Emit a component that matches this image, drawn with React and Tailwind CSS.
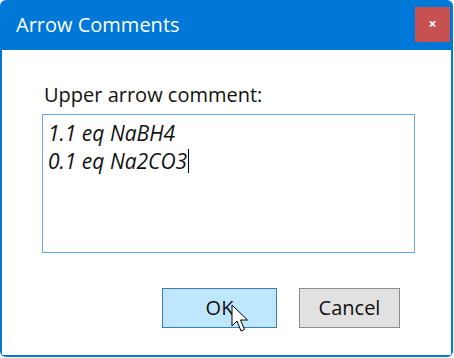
import React from 'react';

// Windows 10 style dialog: "Arrow Comments"
function Cursor() {
    return (
        <svg className="absolute left-[231px] top-[304px]" width="20" height="30" viewBox="0 0 20 30">
            <path d="M1 1 L1 22 L6 17 L10 27 L13.5 25.5 L9.5 16 L16.5 16 Z" fill="#ffffff" stroke="#000000" strokeWidth="1" strokeLinejoin="miter" />
        </svg>
    );
}

export default function App() {
    return (
        <div className="relative w-[454px] h-[358px] bg-white" style={{ fontFamily: '"Open Sans", "Noto Sans", sans-serif' }}>
            <div className="w-[453px] h-[357px] bg-[#0078d7] rounded-[6px] flex flex-col px-[2px] pb-[2px]">
                <div className="h-[50px] flex items-center justify-between shrink-0">
                    <span className="pl-[14px] text-white text-[20px] leading-none">Arrow Comments</span>
                    <div className="w-[35px] h-[35px] mr-[1px] mt-[-2px] bg-[#c75050] flex items-center justify-center text-white font-bold text-[14px] leading-none">×</div>
                </div>
                <div className="flex-1 bg-white flex flex-col">
                    <div className="pl-[42px] pt-[32px] text-[20px] leading-[26px] text-[#111]">Upper arrow comment:</div>
                    <div className="ml-[40px] mt-[6px] w-[373px] h-[139px] border border-[#6aa5e6] px-[5px] pt-[4px] text-[21px] leading-[28px] italic text-[#111]">
                        <div>1.1 eq NaBH4</div>
                        <div className="flex items-center">0.1 eq Na2CO3<span className="inline-block w-[1px] h-[24px] bg-black ml-[1px]" /></div>
                    </div>
                    <div className="flex justify-end gap-[22px] pr-[51px] mt-[35px]">
                        <div className="w-[115px] h-[40px] bg-[#bee6fd] border border-[#3c7fb1] flex items-center justify-center text-[20px] text-[#111]">OK</div>
                        <div className="w-[101px] h-[40px] bg-[#e1e1e1] border border-[#8c8c8c] flex items-center justify-center text-[20px] text-[#111]">Cancel</div>
                    </div>
                </div>
            </div>
            <Cursor />
        </div>
    );
}
